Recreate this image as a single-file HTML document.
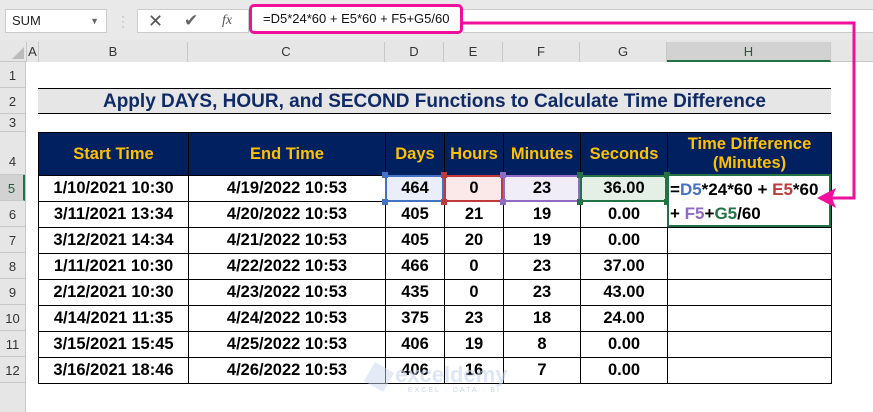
<!DOCTYPE html>
<html><head><meta charset="utf-8"><style>
*{margin:0;padding:0;box-sizing:border-box}
body{width:873px;height:412px;overflow:hidden;background:#fff;font-family:"Liberation Sans",Arial,sans-serif;position:relative}
.a{position:absolute}
.ch{position:absolute;top:42px;height:20px;background:#e6e6e6;border-right:1px solid #c8c8c8;font-size:13px;color:#333;text-align:center;line-height:20px}
.rh{position:absolute;left:0;width:25px;background:#e6e6e6;border-bottom:1px solid #c8c8c8;font-size:13px;color:#333;text-align:center;padding-top:6px}
table{position:absolute;left:38px;top:132px;border-collapse:collapse;table-layout:fixed}
td{border:1px solid #000;font-weight:bold;font-size:16.5px;text-align:center;height:26px;padding:0;color:#000;white-space:nowrap}
tr.h td{background:#002060;color:#ffc000;height:43px;font-size:16.5px;line-height:19px}
.hd{position:absolute;width:6px;height:6px}
</style></head><body>
<div class="a" style="left:0;top:0;width:873px;height:40px;background:#e9e9e9"></div>
<div class="a" style="left:5px;top:9px;width:102px;height:24px;background:#fff;border:1px solid #ccc;font-size:13px;line-height:22px;padding-left:6px;color:#222">SUM<span style="position:absolute;right:7px;top:0;font-size:9px;color:#666">▼</span></div>
<div class="a" style="left:121px;top:14px;font-size:12px;color:#aaa;line-height:5px">·<br>·<br>·</div>
<div class="a" style="left:137px;top:9px;width:112px;height:24px;background:#fff;border:1px solid #ccc"></div>
<div class="a" style="left:148px;top:9px;font-size:18px;color:#555;line-height:24px">✕</div>
<div class="a" style="left:184px;top:9px;font-size:17px;color:#666;line-height:24px">✔</div>
<div class="a" style="left:222px;top:9px;font-size:14px;color:#555;line-height:24px;font-family:'Liberation Serif',serif;font-style:italic">fx</div>
<div class="a" style="left:463px;top:9px;width:410px;height:24px;background:#fff;border-top:1px solid #ccc;border-bottom:1px solid #ccc"></div>
<div class="a" style="left:249px;top:4px;width:214px;height:30px;background:#fff;border:3px solid #f0109c;border-radius:5px;font-size:13px;line-height:24px;padding-left:11px;color:#111">=D5*24*60 + E5*60 + F5+G5/60</div>
<div class="a" style="left:0;top:40px;width:873px;height:22px;background:#e6e6e6;border-bottom:1px solid #c8c8c8"></div>
<div class="a" style="left:12px;top:47px;width:0;height:0;border-left:12px solid transparent;border-bottom:12px solid #bbb"></div>
<div class="ch" style="left:26px;width:13px;border-left:1px solid #c8c8c8">A</div>
<div class="ch" style="left:39px;width:149px">B</div>
<div class="ch" style="left:188px;width:197px">C</div>
<div class="ch" style="left:385px;width:59px">D</div>
<div class="ch" style="left:444px;width:59px">E</div>
<div class="ch" style="left:503px;width:77px">F</div>
<div class="ch" style="left:580px;width:87px">G</div>
<div class="ch" style="left:667px;width:164px;background:#d2d2d2;border-bottom:2px solid #217346;color:#1e5e38">H</div>
<div class="a" style="left:0;top:62px;width:26px;height:350px;background:#e6e6e6;border-right:1px solid #c8c8c8"></div>
<div class="rh" style="top:62px;height:26px">1</div>
<div class="rh" style="top:88px;height:26px">2</div>
<div class="rh" style="top:114px;height:18px;padding-top:1px">3</div>
<div class="rh" style="top:132px;height:43px;padding-top:22px">4</div>
<div class="rh" style="top:175px;height:26px;background:#d2d2d2;border-right:2px solid #217346;color:#1e5e38">5</div>
<div class="rh" style="top:201px;height:26px">6</div>
<div class="rh" style="top:227px;height:26px">7</div>
<div class="rh" style="top:253px;height:26px">8</div>
<div class="rh" style="top:279px;height:26px">9</div>
<div class="rh" style="top:305px;height:26px">10</div>
<div class="rh" style="top:331px;height:26px">11</div>
<div class="rh" style="top:357px;height:26px">12</div>
<div class="a" style="left:38px;top:88px;width:793px;height:26px;background:#e7e6e6;border-top:1px solid #000;border-bottom:1px solid #000;text-align:center;font-weight:bold;font-size:19px;color:#0f2a66;line-height:25px;white-space:nowrap">Apply DAYS, HOUR, and SECOND Functions to Calculate Time Difference</div>
<table>
<colgroup><col style="width:150px"><col style="width:197px"><col style="width:59px"><col style="width:59px"><col style="width:77px"><col style="width:87px"><col style="width:164px"></colgroup>
<tr class="h"><td>Start Time</td><td>End Time</td><td>Days</td><td>Hours</td><td>Minutes</td><td>Seconds</td><td>Time Difference<br>(Minutes)</td></tr>
<tr><td>1/10/2021 10:30</td><td>4/19/2022 10:53</td><td style="background:#e9eef8">464</td><td style="background:#fbe9e9">0</td><td style="background:#f1edf8">23</td><td style="background:#e4f0e6">36.00</td><td rowspan="2"></td></tr>
<tr><td>3/11/2021 13:34</td><td>4/20/2022 10:53</td><td>405</td><td>21</td><td>19</td><td>0.00</td></tr>
<tr><td>3/12/2021 14:34</td><td>4/21/2022 10:53</td><td>405</td><td>20</td><td>19</td><td>0.00</td><td></td></tr>
<tr><td>1/11/2021 10:30</td><td>4/22/2022 10:53</td><td>466</td><td>0</td><td>23</td><td>37.00</td><td></td></tr>
<tr><td>2/12/2021 10:30</td><td>4/23/2022 10:53</td><td>435</td><td>0</td><td>23</td><td>43.00</td><td></td></tr>
<tr><td>4/14/2021 11:35</td><td>4/24/2022 10:53</td><td>375</td><td>23</td><td>18</td><td>24.00</td><td></td></tr>
<tr><td>3/15/2021 15:45</td><td>4/25/2022 10:53</td><td>406</td><td>19</td><td>8</td><td>0.00</td><td></td></tr>
<tr><td>3/16/2021 18:46</td><td>4/26/2022 10:53</td><td>406</td><td>16</td><td>7</td><td>0.00</td><td></td></tr>
</table>
<div class="a" style="left:385px;top:175px;width:59px;height:27px;border:2px solid #4472c4"></div>
<div class="a" style="left:444px;top:175px;width:59px;height:27px;border:2px solid #c0393b"></div>
<div class="a" style="left:503px;top:175px;width:77px;height:27px;border:2px solid #8f6bc4"></div>
<div class="a" style="left:580px;top:175px;width:87px;height:27px;border:2px solid #217346"></div>
<div class="hd" style="left:382px;top:172px;background:#4472c4"></div><div class="hd" style="left:382px;top:199px;background:#4472c4"></div>
<div class="hd" style="left:441px;top:172px;background:#c0393b"></div><div class="hd" style="left:441px;top:199px;background:#c0393b"></div>
<div class="hd" style="left:500px;top:172px;background:#8f6bc4"></div><div class="hd" style="left:500px;top:199px;background:#8f6bc4"></div>
<div class="hd" style="left:577px;top:172px;background:#217346"></div><div class="hd" style="left:577px;top:199px;background:#217346"></div>
<div class="hd" style="left:664px;top:172px;background:#217346"></div><div class="hd" style="left:664px;top:199px;background:#217346"></div>
<div class="a" style="left:667px;top:174px;width:164px;height:53px;border:2px solid #217346;background:#fff;font-weight:bold;font-size:17px;line-height:24px;padding:2px 0 0 1px;color:#000;white-space:nowrap">=<span style="color:#4472c4">D5</span>*24*60 + <span style="color:#c0393b">E5</span>*60<br>+ <span style="color:#8f6bc4">F5</span>+<span style="color:#217346">G5</span>/60</div>
<svg class="a" style="left:0;top:0" width="873" height="412">
<polyline points="463,23 854,23 854,198 832,198" fill="none" stroke="#f0109c" stroke-width="3"/>
<polygon points="817,198 836,188 832,198 836,208" fill="#f0109c"/>
</svg>
<div class="a" style="left:368px;top:366px;width:22px;height:22px;background:#c9d5ee;opacity:.5;transform:rotate(30deg)"></div>
<div class="a" style="left:395px;top:362px;font-size:22px;font-weight:bold;color:#c9d5ee;opacity:.6">exceldemy</div>
<div class="a" style="left:408px;top:387px;font-size:7px;color:#c9d5ee;letter-spacing:2px">EXCEL · DATA · BI</div>
</body></html>
